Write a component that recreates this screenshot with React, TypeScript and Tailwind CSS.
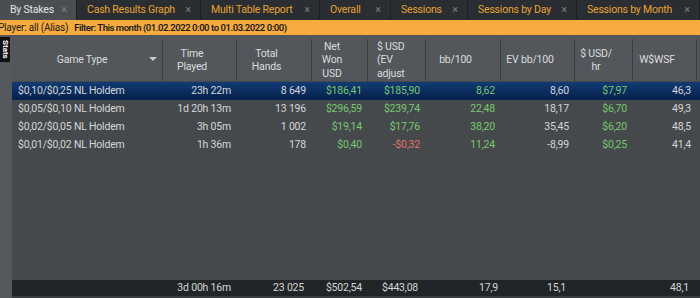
import React from "react";

const tabs = [
  { label: "By Stakes", w: 77, active: true },
  { label: "Cash Results Graph", w: 124 },
  { label: "Multi Table Report", w: 119 },
  { label: "Overall", w: 71 },
  { label: "Sessions", w: 77 },
  { label: "Sessions by Day", w: 109 },
  { label: "Sessions by Month", w: 123 },
];

const G = "text-[#78c86e]";
const R = "text-[#e07068]";
const W = "text-[#d4d6d8]";

const rows: string[][] = [
  ["$0,10/$0,25 NL Holdem", "23h 22m", "8 649", "$186,41", "$185,90", "8,62", "8,60", "$7,97", "46,3"],
  ["$0,05/$0,10 NL Holdem", "1d 20h 13m", "13 196", "$296,59", "$239,74", "22,48", "18,17", "$6,70", "49,3"],
  ["$0,02/$0,05 NL Holdem", "3h 05m", "1 002", "$19,14", "$17,76", "38,20", "35,45", "$6,20", "48,5"],
  ["$0,01/$0,02 NL Holdem", "1h 36m", "178", "$0,40", "-$0,32", "11,24", "-8,99", "$0,25", "41,4"],
];

const colors: string[][] = [
  [W, W, W, G, G, G, W, G, W],
  [W, W, W, G, G, G, W, G, W],
  [W, W, W, G, G, G, W, G, W],
  [W, W, W, G, R, G, W, G, W],
];

const grid =
  "grid grid-cols-[151px_74px_75px_56px_58px_75px_74px_58px_64px_1fr]";

const hc = "flex items-center justify-center text-center pr-[15px] border-r border-[#3b3e41]";

export default function App() {
  return (
    <div
      className="w-[700px] h-[298px] overflow-hidden bg-[#3a3d40] flex flex-col text-[10.5px] leading-[13.5px] tracking-[-0.2px]"
      style={{ fontFamily: 'Roboto, "Noto Sans", sans-serif' }}
    >
      {/* Tabs */}
      <div className="flex h-[20px] bg-[#2a2d31] shrink-0">
        {tabs.map((t) => (
          <div
            key={t.label}
            style={{ width: t.w }}
            className={`shrink-0 flex items-center justify-between pl-[10px] pr-[9px] border-r border-[#1f2124] ${
              t.active ? "bg-[#4a4e53] text-[#e2e4e6]" : "text-[#e9a232]"
            }`}
          >
            <span className="whitespace-nowrap">{t.label}</span>
            <span className="text-[#7d8084] text-[11px]">×</span>
          </div>
        ))}
      </div>
      {/* Filter bar */}
      <div className="h-[15px] bg-[#f6ab40] text-[#1b1b1b] flex items-center whitespace-nowrap shrink-0 -ml-[2px]">
        <span className="text-[10px]">Player: all (Alias)</span>
        <span className="ml-[6px] text-[9.5px] font-semibold tracking-[-0.45px]">
          Filter: This month (01.02.2022 0:00 to 01.03.2022 0:00)
        </span>
      </div>
      {/* Main */}
      <div className="flex flex-1 min-h-0">
        <div className="w-[12px] bg-[#55595d] shrink-0 pt-[2px] flex flex-col">
          <div
            className="bg-[#111] text-white text-[8px] font-bold h-[25px] w-[10px] flex items-center justify-center leading-none tracking-normal"
            style={{ writingMode: "vertical-rl" }}
          >
            Stats
          </div>
        </div>
        <div className="flex-1 flex flex-col bg-[#45494c] text-[#d4d6d8]">
          {/* Header */}
          <div className={`${grid} h-[46px] bg-[#53575b] text-[#dadcde] shrink-0 pt-[4px]`}>
            <div className="relative flex items-center justify-center border-r border-[#3b3e41]">
              <span className="mr-[10px]">Game Type</span>
              <span className="absolute right-[5px] top-[18px] w-0 h-0 border-l-[4px] border-r-[4px] border-t-[4px] border-l-transparent border-r-transparent border-t-[#c8cacc]" />
            </div>
            <div className={hc}>
              Time
              <br />
              Played
            </div>
            <div className={hc}>
              Total
              <br />
              Hands
            </div>
            <div className={hc}>
              Net
              <br />
              Won
              <br />
              USD
            </div>
            <div className="flex items-center pl-[9px] border-r border-[#3b3e41]">
              $ USD
              <br />
              (EV
              <br />
              adjust
            </div>
            <div className={hc}>bb/100</div>
            <div className={hc}>EV bb/100</div>
            <div className={hc}>
              $ USD/
              <br />
              hr
            </div>
            <div className={hc}>W$WSF</div>
            <div />
          </div>
          {/* Rows */}
          <div className="flex-1 pt-[1px]">
            {rows.map((r, i) => (
              <div
                key={i}
                className={`${grid} h-[18px] items-center ${
                  i === 0 ? "bg-gradient-to-b from-[#123c74] to-[#06204a]" : ""
                }`}
              >
                {r.map((v, j) => (
                  <div
                    key={j}
                    className={`${colors[i][j]} whitespace-nowrap ${
                      j === 0 ? "pl-[6px]" : "text-right pr-[6px]"
                    }`}
                  >
                    {v}
                  </div>
                ))}
                <div />
              </div>
            ))}
          </div>
          {/* Footer */}
          <div className={`${grid} h-[16px] bg-[#222528] items-center shrink-0 text-[#d4d6d8]`}>
            <div />
            <div className="text-right pr-[6px]">3d 00h 16m</div>
            <div className="text-right pr-[8px]">23 025</div>
            <div className="text-right pr-[6px]">$502,54</div>
            <div className="pl-[14px]">$443,08</div>
            <div className="pl-[53px]">17,9</div>
            <div className="pl-[46px]">15,1</div>
            <div />
            <div className="text-right pr-[8px]">48,1</div>
            <div />
          </div>
          <div className="h-[2px] bg-[#3a3d40] shrink-0" />
        </div>
      </div>
    </div>
  );
}
